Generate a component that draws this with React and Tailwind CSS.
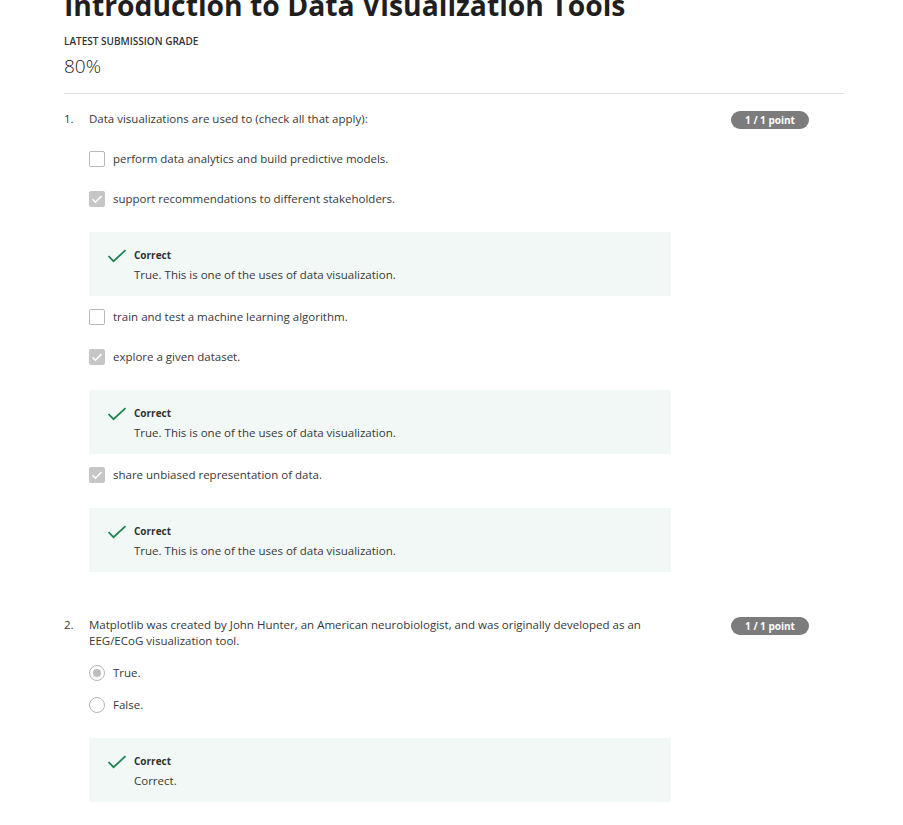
const font = { fontFamily: '"Open Sans", "Liberation Sans", sans-serif' };

function Badge() {
  return (
    <div className="w-[78px] h-[18px] rounded-full bg-[#7c7c7c] text-white text-[10px] font-bold flex items-center justify-center shrink-0">
      1 / 1 point
    </div>
  );
}

function Checkbox({ checked }) {
  if (checked) {
    return (
      <div className="size-4 rounded-[2px] bg-[#c6c6c6] flex items-center justify-center shrink-0">
        <svg viewBox="0 0 16 16" className="size-4">
          <path d="M3.5 8.2l3 3 6-6.2" fill="none" stroke="#fff" strokeWidth="1.6" />
        </svg>
      </div>
    );
  }
  return <div className="size-4 rounded-[2px] border border-[#b9b9b9] bg-white shrink-0" />;
}

function Radio({ checked }) {
  return (
    <div className="size-4 rounded-full border border-[#b5b5b5] flex items-center justify-center shrink-0">
      {checked && <div className="size-2 rounded-full bg-[#bdbdbd]" />}
    </div>
  );
}

function Feedback({ text, className = "" }) {
  return (
    <div className={`bg-[#f2f8f5] h-[64px] flex pl-[18px] pt-[16px] ${className}`}>
      <svg viewBox="0 0 20 14" className="w-[20px] h-[14px] mt-[1px] shrink-0">
        <path d="M1.5 7l5 5.2L18.5 1.2" fill="none" stroke="#1f8354" strokeWidth="1.8" />
      </svg>
      <div className="ml-[7px]">
        <div className="text-[10px] font-bold text-[#333] leading-[14px]">Correct</div>
        <div className="text-[11.5px] text-[#383838] leading-[18px] mt-[4px]">{text}</div>
      </div>
    </div>
  );
}

function CheckOption({ checked, children }) {
  return (
    <div className="h-[40px] flex items-center gap-[8px] text-[11.5px] text-[#383838]">
      <Checkbox checked={checked} />
      <span>{children}</span>
    </div>
  );
}

function RadioOption({ checked, children }) {
  return (
    <div className="h-[32px] flex items-center gap-[8px] text-[11.5px] text-[#383838]">
      <Radio checked={checked} />
      <span>{children}</span>
    </div>
  );
}

const useText = "True. This is one of the uses of data visualization.";

export default function App() {
  return (
    <div className="w-[903px] h-[825px] overflow-hidden bg-white" style={font}>
      <div className="ml-[64px] w-[780px] -mt-[13px]">
        <h1 className="text-[28.3px] font-bold text-[#1f1f1f] leading-[36px] whitespace-nowrap">
          Introduction to Data Visualization Tools
        </h1>
        <div className="mt-[12px] text-[10px] font-semibold text-[#333] leading-[12px]">
          LATEST SUBMISSION GRADE
        </div>
        <div className="mt-[6px] text-[19px] font-light text-[#1f1f1f] leading-[26px]">80%</div>
        <div className="mt-[14px] border-t border-[#e2e2e2]" />

        <div className="pt-[17px] flex pr-[35px]">
          <div className="w-[25px] text-[11.5px] text-[#383838] leading-[16px]">1.</div>
          <div className="w-[582px]">
            <div className="text-[11.5px] text-[#383838] leading-[16px]">
              Data visualizations are used to (check all that apply):
            </div>
            <div className="mt-[12px]">
              <CheckOption>perform data analytics and build predictive models.</CheckOption>
              <CheckOption checked>support recommendations to different stakeholders.</CheckOption>
              <Feedback text={useText} className="mt-[13px] mb-[1px]" />
              <CheckOption>train and test a machine learning algorithm.</CheckOption>
              <CheckOption checked>explore a given dataset.</CheckOption>
              <Feedback text={useText} className="mt-[13px] mb-[1px]" />
              <CheckOption checked>share unbiased representation of data.</CheckOption>
              <Feedback text={useText} className="mt-[13px]" />
            </div>
          </div>
          <div className="ml-auto">
            <Badge />
          </div>
        </div>

        <div className="pt-[45px] flex pr-[35px]">
          <div className="w-[25px] text-[11.5px] text-[#383838] leading-[16px]">2.</div>
          <div className="w-[582px]">
            <div className="text-[11.5px] text-[#383838] leading-[16px] pr-[10px]">
              Matplotlib was created by John Hunter, an American neurobiologist, and was originally developed as an EEG/ECoG visualization tool.
            </div>
            <div className="mt-[8px]">
              <RadioOption checked>True.</RadioOption>
              <RadioOption>False.</RadioOption>
              <Feedback text="Correct." className="mt-[17px]" />
            </div>
          </div>
          <div className="ml-auto">
            <Badge />
          </div>
        </div>
      </div>
    </div>
  );
}
